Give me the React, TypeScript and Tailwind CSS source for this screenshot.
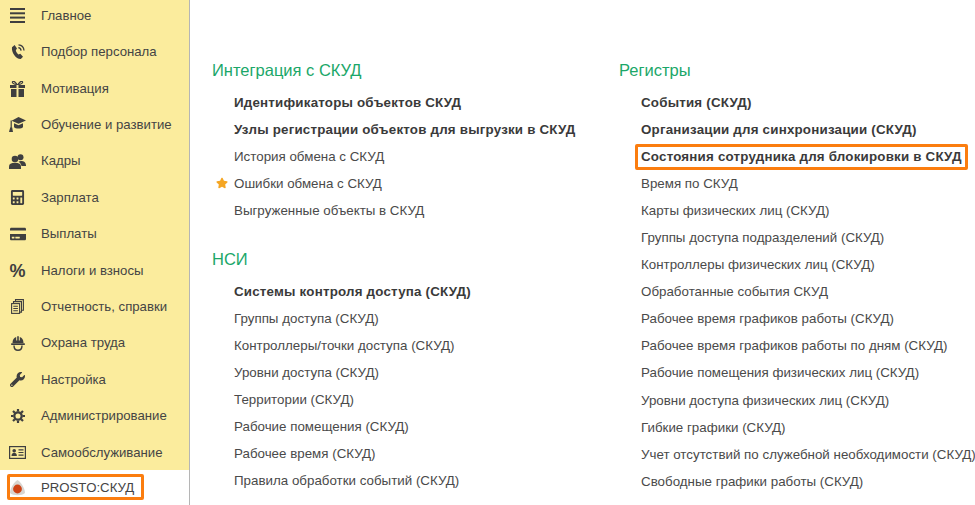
import type { ReactNode } from 'react';
import { FaCalculator, FaCreditCard, FaStar, FaWrench } from 'react-icons/fa';

const font = 'font-["Liberation_Sans",Arial,sans-serif]';
const ink = '#3f3f3f';

function BarsIcon() {
  return (
    <svg width="15" height="15" viewBox="0 0 15 15" fill={ink}>
      <rect x="0" y="0" width="15" height="2" />
      <rect x="0" y="4.3" width="15" height="2" />
      <rect x="0" y="8.6" width="15" height="2" />
      <rect x="0" y="13" width="15" height="2" />
    </svg>
  );
}

function PhoneIcon() {
  return (
    <svg width="14" height="16" viewBox="0 0 14 16" fill={ink}>
      <path d="M3.600 1 6 4.400 4.800 6.200c.3 1.600 1.200 3.100 2.600 4.200l1.900-.7L12 12.800 9.800 15C5 15.200 .2 8.400 1 3.200z" />
      <path d="M7.500 .8c3 .3 5.300 2.600 5.500 5.700M7.300 3.700c1.500.2 2.600 1.300 2.800 2.900" fill="none" stroke={ink} strokeWidth="1.300" />
    </svg>
  );
}

function GiftIcon() {
  return (
    <svg width="15" height="16" viewBox="0 0 15 16" fill={ink}>
      <path d="M7 3.500C5 .5 3.500-.2 2.600.6 1.700 1.500 3.500 3.500 7 3.500zM8 3.500c2-3 3.500-3.700 4.400-2.900.9.900-.9 2.900-4.400 2.900z" fill="none" stroke={ink} strokeWidth="1.200" />
      <rect x="0" y="4" width="6.500" height="3" />
      <rect x="8.500" y="4" width="6.500" height="3" />
      <rect x="1" y="8" width="5.500" height="8" />
      <rect x="8.500" y="8" width="5.500" height="8" />
    </svg>
  );
}

function CapIcon() {
  return (
    <svg width="17" height="15" viewBox="0 0 17 15" fill={ink}>
      <path d="M9.500 0 17 3.400 9.500 6.800 2.600 3.700z" />
      <path d="M5 6.300 9.500 8.300 14 6.300V10c-1 2-8 2-9 0z" />
      <rect x="1.600" y="3.500" width="1.200" height="7.500" />
      <path d="M1.200 10.500h2L4 15H0z" />
    </svg>
  );
}

function UsersIcon() {
  return (
    <svg width="17" height="15" viewBox="0 0 17 15" fill={ink}>
      <circle cx="11.500" cy="3.200" r="3" />
      <path d="M12 7c2.800 0 5 1.300 5 4.500V12h-4.500c-.3-2-1.500-3.500-3-4.300.6-.4 1.500-.7 2.500-.7z" />
      <circle cx="6" cy="5" r="3.300" />
      <path d="M0 15v-2.500C0 10 2 8.800 6 8.800s6 1.200 6 3.700V15z" />
    </svg>
  );
}

function CopyIcon() {
  return (
    <svg width="13" height="15" viewBox="0 0 13 15" fill="none" stroke={ink} strokeWidth="1.100">
      <path d="M4.500 2.500V.6h7.900v10.600h-1.700" />
      <path d="M2.500 4.500V2.600h8v10.500H8.800" />
      <rect x="0.600" y="4.600" width="8" height="9.800" />
      <path d="M2.300 7.200h4.600M2.300 9.500h4.600M2.300 11.800h4.600" />
    </svg>
  );
}

function HelmetIcon() {
  return (
    <svg width="14" height="15" viewBox="0 0 14 15" fill={ink}>
      <path d="M1.500 7C1.500 3.500 3 1.400 5.200.9V4.500h1V.3h1.600v4.200h1V.9c2.200.5 3.700 2.600 3.700 6.100z" />
      <rect x="0" y="7.300" width="14" height="1.700" rx="0.800" />
      <path d="M3 9.500c0 3 1.700 4.800 4 4.800s4-1.800 4-4.800" fill="none" stroke={ink} strokeWidth="1.400" />
    </svg>
  );
}

function GearIcon() {
  return (
    <svg width="14" height="14" viewBox="0 0 14 14" fill="none" stroke={ink}>
      <circle cx="7" cy="7" r="3.700" strokeWidth="2.300" />
      <path d="M7 0v2.500M7 11.500V14M0 7h2.500M11.500 7H14M2 2l1.800 1.800M10.200 10.200 12 12M12 2l-1.800 1.800M3.800 10.200 2 12" strokeWidth="2.200" />
    </svg>
  );
}

function CardIdIcon() {
  return (
    <svg width="17" height="13" viewBox="0 0 17 13" fill="none">
      <rect x="0.600" y="0.600" width="15.800" height="11.800" stroke={ink} strokeWidth="1.200" />
      <circle cx="5.200" cy="4.800" r="1.800" fill={ink} />
      <path d="M2.500 10c0-2.200 1.300-3.200 2.700-3.200s2.700 1 2.700 3.200z" fill={ink} />
      <path d="M9.500 3.800h5M9.500 6.500h5M9.500 9.200h5" stroke={ink} strokeWidth="1.200" />
    </svg>
  );
}

function ProstoIcon() {
  return (
    <svg width="15" height="16" viewBox="0 0 15 16">
      <path d="M7.500 0C10 1 15 8 15 13 12 16 3 16 0 13 0 8 5 1 7.500 0z" fill="#d8d5d0" />
      <circle cx="7.500" cy="9" r="4.400" fill="#cf4316" />
    </svg>
  );
}

const nav: { label: string; icon: ReactNode }[] = [
  { label: 'Главное', icon: <BarsIcon /> },
  { label: 'Подбор персонала', icon: <PhoneIcon /> },
  { label: 'Мотивация', icon: <GiftIcon /> },
  { label: 'Обучение и развитие', icon: <CapIcon /> },
  { label: 'Кадры', icon: <UsersIcon /> },
  { label: 'Зарплата', icon: <FaCalculator size={15} /> },
  { label: 'Выплаты', icon: <FaCreditCard size={16} /> },
  { label: 'Налоги и взносы', icon: <span className="text-[18px] font-bold leading-none">%</span> },
  { label: 'Отчетность, справки', icon: <CopyIcon /> },
  { label: 'Охрана труда', icon: <HelmetIcon /> },
  { label: 'Настройка', icon: <FaWrench size={15} /> },
  { label: 'Администрирование', icon: <GearIcon /> },
  { label: 'Самообслуживание', icon: <CardIdIcon /> },
];

type Item = { text: string; bold?: boolean; star?: boolean; boxed?: boolean };

const integration: Item[] = [
  { text: 'Идентификаторы объектов СКУД', bold: true },
  { text: 'Узлы регистрации объектов для выгрузки в СКУД', bold: true },
  { text: 'История обмена с СКУД' },
  { text: 'Ошибки обмена с СКУД', star: true },
  { text: 'Выгруженные объекты в СКУД' },
];

const nsi: Item[] = [
  { text: 'Системы контроля доступа (СКУД)', bold: true },
  { text: 'Группы доступа (СКУД)' },
  { text: 'Контроллеры/точки доступа (СКУД)' },
  { text: 'Уровни доступа (СКУД)' },
  { text: 'Территории (СКУД)' },
  { text: 'Рабочие помещения (СКУД)' },
  { text: 'Рабочее время (СКУД)' },
  { text: 'Правила обработки событий (СКУД)' },
];

const registers: Item[] = [
  { text: 'События (СКУД)', bold: true },
  { text: 'Организации для синхронизации (СКУД)', bold: true },
  { text: 'Состояния сотрудника для блокировки в СКУД', bold: true, boxed: true },
  { text: 'Время по СКУД' },
  { text: 'Карты физических лиц (СКУД)' },
  { text: 'Группы доступа подразделений (СКУД)' },
  { text: 'Контроллеры физических лиц (СКУД)' },
  { text: 'Обработанные события СКУД' },
  { text: 'Рабочее время графиков работы (СКУД)' },
  { text: 'Рабочее время графиков работы по дням (СКУД)' },
  { text: 'Рабочие помещения физических лиц (СКУД)' },
  { text: 'Уровни доступа физических лиц (СКУД)' },
  { text: 'Гибкие графики (СКУД)' },
  { text: 'Учет отсутствий по служебной необходимости (СКУД)' },
  { text: 'Свободные графики работы (СКУД)' },
];

function LinkRow({ item }: { item: Item }) {
  return (
    <div
      className={`relative flex h-[27.1px] items-center whitespace-nowrap pl-[22px] text-[13.35px] ${
        item.bold ? 'font-bold tracking-[0.2px] text-[#3a3a3a]' : 'text-[#4a4a4a]'
      }`}
    >
      {item.star && <FaStar size={12} className="absolute left-[4px] top-[7px] text-[#f5a623]" />}
      {item.boxed && (
        <span className="absolute left-[16px] top-[0.8px] h-[26px] w-[333px] rounded-[2px] border-[3px] border-[#fb7d0f]" />
      )}
      {item.text}
    </div>
  );
}

function Heading({ children }: { children: ReactNode }) {
  return <h2 className="flex h-[30px] items-center text-[16.5px] font-normal text-[#1ba769]">{children}</h2>;
}

export default function App() {
  return (
    <div className={`flex h-[505px] w-[975px] overflow-hidden bg-white ${font}`}>
      <aside className="flex h-full w-[190px] shrink-0 flex-col border-r border-[#b5b5b5]">
        <nav className="h-[470px] bg-[#fbec9d]">
          <div className="-mt-[2.4px]">
            {nav.map((n) => (
              <div key={n.label} className="flex h-[36.4px] items-center text-[13.2px] text-[#444444]">
                <span className="flex w-[41px] shrink-0 justify-center pr-[6px] text-[#3f3f3f]">{n.icon}</span>
                {n.label}
              </div>
            ))}
          </div>
        </nav>
        <div className="relative flex flex-1 items-center pt-[1px] text-[13.2px] text-[#444444]">
          <span className="flex w-[41px] shrink-0 justify-center pr-[6px]">
            <ProstoIcon />
          </span>
          PROSTO:СКУД
          <span className="absolute left-[7px] top-[4px] h-[26px] w-[137px] rounded-[2px] border-[3px] border-[#fb7d0f]" />
        </div>
      </aside>
      <main className="flex flex-1 pl-[22px] pt-[55px]">
        <section className="w-[407px] shrink-0">
          <Heading>Интеграция с СКУД</Heading>
          <div className="mt-[4px]">
            {integration.map((i) => (
              <LinkRow key={i.text} item={i} />
            ))}
          </div>
          <div className="mt-[19.5px]">
            <Heading>НСИ</Heading>
          </div>
          <div className="mt-[4px]">
            {nsi.map((i) => (
              <LinkRow key={i.text} item={i} />
            ))}
          </div>
        </section>
        <section>
          <Heading>Регистры</Heading>
          <div className="mt-[4px]">
            {registers.map((i) => (
              <LinkRow key={i.text} item={i} />
            ))}
          </div>
        </section>
      </main>
    </div>
  );
}
